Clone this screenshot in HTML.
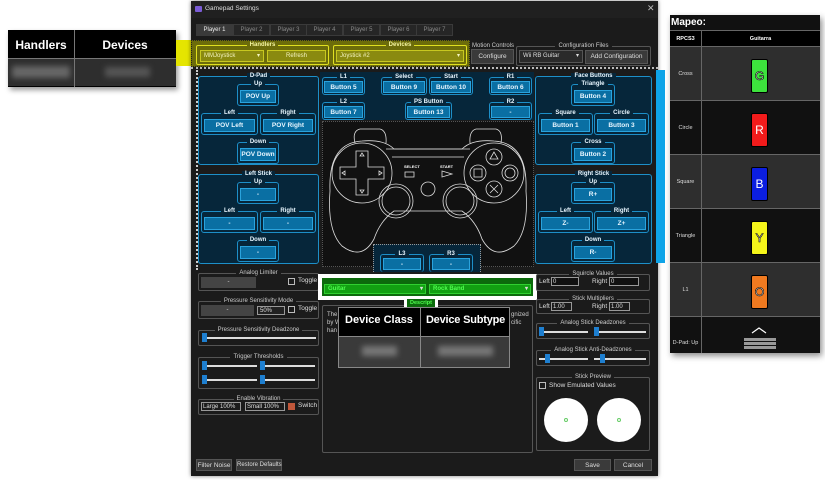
<!DOCTYPE html>
<html><head><meta charset="utf-8">
<style>
*{box-sizing:border-box;margin:0;padding:0;white-space:nowrap}
body{width:825px;height:480px;background:#fff;position:relative;overflow:hidden;font-family:"Liberation Sans",sans-serif;font-size:6px;color:#ddd}
.a{position:absolute}
.grp{position:absolute;border:1px solid #555;border-radius:2px}
.grp>.lb{position:absolute;top:-5px;left:0;right:0;text-align:center;font-size:6px;line-height:8px;color:#ccc}
.grp>.lb span{background:#1b1b1b;padding:0 3px}
.bg{position:absolute;border:1.5px solid #1d8fc8;border-radius:3px;background:#06263a}
.bg>.lb{position:absolute;top:-5px;left:0;right:0;text-align:center;font-size:6px;line-height:8px;color:#e8f6ff;font-weight:bold}
.bg>.lb span{background:#06263a;padding:0 3px}
.bb{position:absolute;background:#0a6fa3;border:1px solid #2aa3dd;color:#e8f6ff;font-size:6.5px;font-weight:bold;text-align:center;line-height:12px}
.btn{position:absolute;background:#3a3a3a;border:1px solid #555;color:#ddd;font-size:6.5px;text-align:center}
.tab{position:absolute;top:24px;height:12px;width:37px;background:#262626;border:1px solid #3a3a3a;color:#888;font-size:6px;text-align:center;line-height:11px}
.sl{position:absolute;height:2px;background:#ddd}
.kn{position:absolute;width:5px;height:9px;background:#1e7fd0}
.cell{position:absolute;display:flex;align-items:center;justify-content:center}
</style></head><body>

<div class="a" style="left:8px;top:30px;width:168px;height:57px;background:#000;box-shadow:2px 3px 5px rgba(0,0,0,.4)"></div>
<div class="a" style="left:8px;top:30px;width:66px;height:28px;color:#fff;font-size:12px;font-weight:bold;text-align:center;line-height:30px">Handlers</div>
<div class="a" style="left:74px;top:30px;width:102px;height:28px;color:#fff;font-size:12px;font-weight:bold;text-align:center;line-height:30px">Devices</div>
<div class="a" style="left:8px;top:58px;width:168px;height:28px;background:#2e2e2e;border-top:1px solid #777"></div>
<div class="a" style="left:74px;top:30px;width:1px;height:57px;background:#777"></div>
<div class="a" style="left:12px;top:66px;width:58px;height:12px;background:#666;filter:blur(3px)"></div>
<div class="a" style="left:105px;top:67px;width:45px;height:10px;background:#555;filter:blur(3px)"></div>
<div class="a" style="left:176px;top:40px;width:16px;height:26px;background:#e5e500"></div>

<div class="a" style="left:191px;top:1px;width:467px;height:475px;background:#1b1b1b;box-shadow:0 0 4px rgba(0,0,0,.5)"></div>
<div class="a" style="left:191px;top:1px;width:467px;height:17px;background:#202020"></div>
<div class="a" style="left:195px;top:6px;width:7px;height:6px;background:#7b5cd6;border-radius:1px"></div>
<div class="a" style="left:205px;top:5px;font-size:6.5px;color:#ddd">Gamepad Settings</div>
<div class="a" style="left:647px;top:3px;font-size:9px;color:#bbb">✕</div>

<div class="tab" style="left:196px;background:#3a3a3a;color:#eee">Player 1</div>
<div class="tab" style="left:233px">Player 2</div>
<div class="tab" style="left:270px">Player 3</div>
<div class="tab" style="left:306px">Player 4</div>
<div class="tab" style="left:343px">Player 5</div>
<div class="tab" style="left:380px">Player 6</div>
<div class="tab" style="left:416px">Player 7</div>

<div class="a" style="left:191px;top:40px;width:279px;height:27px;background:#6c6c0a;border:1.5px dotted #222"></div>
<div class="a" style="left:196px;top:45px;width:133px;height:20px;border:1px solid #e0e020;border-radius:2px"></div>
<div class="a" style="left:196px;top:42px;width:133px;text-align:center;font-size:6px;font-weight:bold;color:#f5f5a0"><span style="background:#6c6c0a;padding:0 3px">Handlers</span></div>
<div class="a" style="left:200px;top:50px;width:64px;height:12px;background:#8a8a10;border:1px solid #c8c820;color:#f5f5c0;font-size:6px;line-height:10px;padding-left:3px">MMJoystick<span style="float:right;padding-right:3px">▾</span></div>
<div class="a" style="left:267px;top:50px;width:59px;height:12px;background:#8a8a10;border:1px solid #c8c820;color:#f5f5c0;font-size:6px;line-height:10px;text-align:center">Refresh</div>
<div class="a" style="left:333px;top:45px;width:134px;height:20px;border:1px solid #e0e020;border-radius:2px"></div>
<div class="a" style="left:333px;top:42px;width:134px;text-align:center;font-size:6px;font-weight:bold;color:#f5f5a0"><span style="background:#6c6c0a;padding:0 3px">Devices</span></div>
<div class="a" style="left:336px;top:50px;width:128px;height:12px;background:#8a8a10;border:1px solid #c8c820;color:#f5f5c0;font-size:6px;line-height:10px;padding-left:3px">Joystick #2<span style="float:right;padding-right:3px">▾</span></div>

<div class="a" style="left:472px;top:43px;font-size:6px;color:#ccc">Motion Controls</div>
<div class="btn" style="left:471px;top:49px;width:43px;height:15px;line-height:13px">Configure</div>
<div class="grp" style="left:516px;top:46px;width:135px;height:20px"><div class="lb"><span>Configuration Files</span></div></div>
<div class="a" style="left:519px;top:50px;width:64px;height:13px;background:#2a2a2a;border:1px solid #555;font-size:6px;line-height:11px;padding-left:3px">Wii RB Guitar<span style="float:right;padding-right:3px">▾</span></div>
<div class="btn" style="left:585px;top:50px;width:63px;height:14px;line-height:12px">Add Configuration</div>

<div class="a" style="left:191px;top:67px;width:467px;height:205px;border-top:2px dotted #bbb"></div>
<div class="a" style="left:196px;top:70px;width:2px;height:200px;border-left:2px dotted #ccc"></div>
<div class="a" style="left:656px;top:70px;width:9px;height:193px;background:#0fa4e8"></div>

<div class="bg" style="left:198px;top:76px;width:121px;height:89px"><div class="lb"><span>D-Pad</span></div></div>
<div class="bg" style="left:237px;top:84px;width:42px;height:22px"><div class="lb"><span>Up</span></div></div>
<div class="bb" style="left:240px;top:90px;width:36px;height:13px">POV Up</div>
<div class="bg" style="left:201px;top:113px;width:57px;height:22px"><div class="lb"><span>Left</span></div></div>
<div class="bb" style="left:204px;top:119px;width:51px;height:13px">POV Left</div>
<div class="bg" style="left:260px;top:113px;width:56px;height:22px"><div class="lb"><span>Right</span></div></div>
<div class="bb" style="left:263px;top:119px;width:50px;height:13px">POV Right</div>
<div class="bg" style="left:237px;top:142px;width:42px;height:22px"><div class="lb"><span>Down</span></div></div>
<div class="bb" style="left:240px;top:148px;width:36px;height:13px">POV Down</div>

<div class="bg" style="left:198px;top:174px;width:121px;height:90px"><div class="lb"><span>Left Stick</span></div></div>
<div class="bg" style="left:237px;top:182px;width:42px;height:22px"><div class="lb"><span>Up</span></div></div>
<div class="bb" style="left:240px;top:188px;width:36px;height:13px">-</div>
<div class="bg" style="left:201px;top:211px;width:57px;height:22px"><div class="lb"><span>Left</span></div></div>
<div class="bb" style="left:204px;top:217px;width:51px;height:13px">-</div>
<div class="bg" style="left:260px;top:211px;width:56px;height:22px"><div class="lb"><span>Right</span></div></div>
<div class="bb" style="left:263px;top:217px;width:50px;height:13px">-</div>
<div class="bg" style="left:237px;top:240px;width:42px;height:22px"><div class="lb"><span>Down</span></div></div>
<div class="bb" style="left:240px;top:246px;width:36px;height:13px">-</div>

<div class="bg" style="left:535px;top:76px;width:117px;height:89px"><div class="lb"><span>Face Buttons</span></div></div>
<div class="bg" style="left:571px;top:84px;width:44px;height:22px"><div class="lb"><span>Triangle</span></div></div>
<div class="bb" style="left:574px;top:90px;width:38px;height:13px">Button 4</div>
<div class="bg" style="left:538px;top:113px;width:55px;height:22px"><div class="lb"><span>Square</span></div></div>
<div class="bb" style="left:541px;top:119px;width:49px;height:13px">Button 1</div>
<div class="bg" style="left:594px;top:113px;width:55px;height:22px"><div class="lb"><span>Circle</span></div></div>
<div class="bb" style="left:597px;top:119px;width:49px;height:13px">Button 3</div>
<div class="bg" style="left:571px;top:142px;width:44px;height:22px"><div class="lb"><span>Cross</span></div></div>
<div class="bb" style="left:574px;top:148px;width:38px;height:13px">Button 2</div>

<div class="bg" style="left:535px;top:174px;width:117px;height:90px"><div class="lb"><span>Right Stick</span></div></div>
<div class="bg" style="left:571px;top:182px;width:44px;height:22px"><div class="lb"><span>Up</span></div></div>
<div class="bb" style="left:574px;top:188px;width:38px;height:13px">R+</div>
<div class="bg" style="left:538px;top:211px;width:55px;height:22px"><div class="lb"><span>Left</span></div></div>
<div class="bb" style="left:541px;top:217px;width:49px;height:13px">Z-</div>
<div class="bg" style="left:594px;top:211px;width:55px;height:22px"><div class="lb"><span>Right</span></div></div>
<div class="bb" style="left:597px;top:217px;width:49px;height:13px">Z+</div>
<div class="bg" style="left:571px;top:240px;width:44px;height:22px"><div class="lb"><span>Down</span></div></div>
<div class="bb" style="left:574px;top:246px;width:38px;height:13px">R-</div>

<div class="a" style="left:320px;top:72px;width:214px;height:48px;background:#06263a"></div>
<div class="bg" style="left:322px;top:77px;width:43px;height:18px"><div class="lb"><span>L1</span></div></div>
<div class="bb" style="left:324px;top:81px;width:39px;height:12px">Button 5</div>
<div class="bg" style="left:381px;top:77px;width:46px;height:18px"><div class="lb"><span>Select</span></div></div>
<div class="bb" style="left:383px;top:81px;width:42px;height:12px">Button 9</div>
<div class="bg" style="left:429px;top:77px;width:44px;height:18px"><div class="lb"><span>Start</span></div></div>
<div class="bb" style="left:431px;top:81px;width:40px;height:12px">Button 10</div>
<div class="bg" style="left:489px;top:77px;width:43px;height:18px"><div class="lb"><span>R1</span></div></div>
<div class="bb" style="left:491px;top:81px;width:39px;height:12px">Button 6</div>
<div class="bg" style="left:322px;top:102px;width:43px;height:18px"><div class="lb"><span>L2</span></div></div>
<div class="bb" style="left:324px;top:106px;width:39px;height:12px">Button 7</div>
<div class="bg" style="left:405px;top:102px;width:47px;height:18px"><div class="lb"><span>PS Button</span></div></div>
<div class="bb" style="left:407px;top:106px;width:43px;height:12px">Button 13</div>
<div class="bg" style="left:489px;top:102px;width:43px;height:18px"><div class="lb"><span>R2</span></div></div>
<div class="bb" style="left:491px;top:106px;width:39px;height:12px">-</div>

<div class="a" style="left:322px;top:121px;width:212px;height:146px;background:#111;border:1.5px dotted #555"></div>
<svg class="a" style="left:322px;top:121px" width="212" height="146" viewBox="0 0 212 146" fill="none" stroke="#ddd" stroke-width="0.8">
<path d="M33 22 Q30 10 38 8 L58 8 Q65 10 64 22 M148 22 Q147 10 154 8 L174 8 Q181 10 179 22"/>
<path d="M64 28 L148 28 M70 36 L142 36"/>
<path d="M40 20 Q6 22 8 70 Q5 110 20 125 Q40 140 52 118 Q58 100 72 90 L140 90 Q154 100 160 118 Q172 140 192 125 Q207 110 204 70 Q206 22 172 20 Q150 18 140 28 L72 28 Q62 18 40 20Z"/>
<circle cx="40" cy="52" r="30"/><circle cx="172" cy="52" r="30"/>
<path d="M34 30 h12 v16 h16 v12 h-16 v16 h-12 v-16 h-16 v-12 h16z"/>
<path d="M40 32 l-2 3 h4z M40 72 l-2 -3 h4z M20 52 l3 -2 v4z M60 52 l-3 -2 v4z"/>
<circle cx="172" cy="36" r="8"/><circle cx="172" cy="68" r="8"/><circle cx="156" cy="52" r="8"/><circle cx="188" cy="52" r="8"/>
<path d="M172 31 l-4 7 h8z M168 64 l8 8 M176 64 l-8 8"/><rect x="152" y="48" width="8" height="8"/><circle cx="188" cy="52" r="5"/>
<rect x="83" y="51" width="9" height="5"/><path d="M120 50 l10 3 l-10 3z"/>
<circle cx="106" cy="68" r="7"/>
<circle cx="74" cy="80" r="17"/><circle cx="74" cy="80" r="14"/><circle cx="138" cy="80" r="17"/><circle cx="138" cy="80" r="14"/>
<text x="82" y="47" font-size="4" fill="#fff" stroke="none" font-family="Liberation Sans" font-weight="bold">SELECT</text>
<text x="118" y="47" font-size="4" fill="#fff" stroke="none" font-family="Liberation Sans" font-weight="bold">START</text>
</svg>
<div class="a" style="left:373px;top:244px;width:108px;height:28px;background:#06263a;border:1.5px dotted #999;border-bottom:none"></div>
<div class="bg" style="left:380px;top:254px;width:44px;height:18px;border-bottom:none"><div class="lb"><span>L3</span></div></div>
<div class="bb" style="left:383px;top:258px;width:38px;height:12px">-</div>
<div class="bg" style="left:429px;top:254px;width:44px;height:18px;border-bottom:none"><div class="lb"><span>R3</span></div></div>
<div class="bb" style="left:432px;top:258px;width:38px;height:12px">-</div>

<div class="grp" style="left:198px;top:273px;width:121px;height:18px"><div class="lb"><span>Analog Limiter</span></div></div>
<div class="a" style="left:201px;top:277px;width:55px;height:11px;background:#444;text-align:center;line-height:11px">-</div>
<div class="a" style="left:288px;top:278px;width:7px;height:7px;border:1px solid #bbb"></div>
<div class="a" style="left:298px;top:277px;font-size:6.5px">Toggle</div>
<div class="grp" style="left:198px;top:301px;width:121px;height:18px"><div class="lb"><span>Pressure Sensitivity Mode</span></div></div>
<div class="a" style="left:201px;top:305px;width:53px;height:11px;background:#444;text-align:center;line-height:11px">-</div>
<div class="a" style="left:257px;top:306px;width:28px;height:9px;background:#222;border:1px solid #999;font-size:6px;line-height:8px;padding-left:2px">50%</div>
<div class="a" style="left:288px;top:306px;width:7px;height:7px;border:1px solid #bbb"></div>
<div class="a" style="left:298px;top:305px;font-size:6.5px">Toggle</div>
<div class="grp" style="left:198px;top:330px;width:121px;height:16px"><div class="lb"><span>Pressure Sensitivity Deadzone</span></div></div>
<div class="sl" style="left:204px;top:337px;width:112px"></div><div class="kn" style="left:202px;top:333px"></div>
<div class="grp" style="left:198px;top:357px;width:121px;height:32px"><div class="lb"><span>Trigger Thresholds</span></div></div>
<div class="sl" style="left:204px;top:365px;width:53px"></div><div class="kn" style="left:202px;top:361px"></div>
<div class="sl" style="left:262px;top:365px;width:53px"></div><div class="kn" style="left:260px;top:361px"></div>
<div class="sl" style="left:204px;top:379px;width:53px"></div><div class="kn" style="left:202px;top:375px"></div>
<div class="sl" style="left:262px;top:379px;width:53px"></div><div class="kn" style="left:260px;top:375px"></div>
<div class="grp" style="left:198px;top:399px;width:121px;height:16px"><div class="lb"><span>Enable Vibration</span></div></div>
<div class="a" style="left:201px;top:402px;width:40px;height:9px;border:1px solid #999;font-size:6px;line-height:8px;padding-left:1px">Large 100%</div>
<div class="a" style="left:245px;top:402px;width:40px;height:9px;border:1px solid #999;font-size:6px;line-height:8px;padding-left:1px">Small 100%</div>
<div class="a" style="left:288px;top:403px;width:7px;height:7px;background:#c0573a"></div>
<div class="a" style="left:298px;top:402px;font-size:6.5px">Switch</div>

<div class="a" style="left:322px;top:305px;width:211px;height:148px;border:1px solid #555;border-radius:2px"></div>
<div class="a" style="left:327px;top:311px;font-size:6px;line-height:8px;color:#ccc;white-space:normal">The<br>by W<br>han</div>
<div class="a" style="left:511px;top:311px;font-size:6px;line-height:8px;color:#ccc;white-space:normal">gnized<br>cific</div>

<div class="a" style="left:318px;top:274px;width:219px;height:26px;border:4px solid #fff;background:#0c6a0c"></div>
<div class="a" style="left:324px;top:284px;width:102px;height:10px;background:#12a012;border:1px solid #30d030;color:#50ff50;font-size:6px;font-weight:bold;line-height:8px;padding-left:3px">Guitar<span style="float:right;padding-right:2px;color:#ddd">▾</span></div>
<div class="a" style="left:429px;top:284px;width:102px;height:10px;background:#12a012;border:1px solid #30d030;color:#50ff50;font-size:6px;font-weight:bold;line-height:8px;padding-left:3px">Rock Band<span style="float:right;padding-right:2px;color:#ddd">▾</span></div>
<div class="a" style="left:404px;top:299px;width:34px;height:9px;border-left:3px solid #fff;border-right:3px solid #fff;background:#0c6a0c;color:#50ff50;font-size:5.5px;font-weight:bold;text-align:center;line-height:9px;overflow:hidden">Descript</div>

<div class="a" style="left:338px;top:307px;width:172px;height:61px;background:#000;border:1px solid #888"></div>
<div class="a" style="left:338px;top:336px;width:172px;height:32px;background:#3a3a3a;border:1px solid #888"></div>
<div class="a" style="left:420px;top:307px;width:1px;height:61px;background:#888"></div>
<div class="a" style="left:338px;top:314px;width:82px;text-align:center;font-size:11px;font-weight:bold;color:#fff">Device Class</div>
<div class="a" style="left:421px;top:314px;width:89px;text-align:center;font-size:11px;font-weight:bold;color:#fff;letter-spacing:-0.2px">Device Subtype</div>
<div class="a" style="left:362px;top:346px;width:35px;height:10px;background:#777;filter:blur(3px)"></div>
<div class="a" style="left:438px;top:346px;width:55px;height:10px;background:#777;filter:blur(3px)"></div>

<div class="grp" style="left:536px;top:274px;width:114px;height:17px"><div class="lb"><span>Squircle Values</span></div></div>
<div class="a" style="left:539px;top:278px;font-size:6.5px">Left</div>
<div class="a" style="left:551px;top:277px;width:28px;height:9px;border:1px solid #999;background:#111;font-size:6px;line-height:8px;padding-left:1px">0</div>
<div class="a" style="left:592px;top:278px;font-size:6.5px">Right</div>
<div class="a" style="left:609px;top:277px;width:30px;height:9px;border:1px solid #999;background:#111;font-size:6px;line-height:8px;padding-left:1px">0</div>
<div class="grp" style="left:536px;top:299px;width:114px;height:15px"><div class="lb"><span>Stick Multipliers</span></div></div>
<div class="a" style="left:539px;top:303px;font-size:6.5px">Left</div>
<div class="a" style="left:551px;top:302px;width:21px;height:9px;border:1px solid #999;font-size:6px;line-height:8px;padding-left:1px">1.00</div>
<div class="a" style="left:592px;top:303px;font-size:6.5px">Right</div>
<div class="a" style="left:609px;top:302px;width:21px;height:9px;border:1px solid #999;font-size:6px;line-height:8px;padding-left:1px">1.00</div>
<div class="grp" style="left:536px;top:323px;width:114px;height:16px"><div class="lb"><span>Analog Stick Deadzones</span></div></div>
<div class="sl" style="left:541px;top:331px;width:47px"></div><div class="kn" style="left:539px;top:327px"></div>
<div class="sl" style="left:596px;top:331px;width:50px"></div><div class="kn" style="left:594px;top:327px"></div>
<div class="grp" style="left:536px;top:350px;width:114px;height:16px"><div class="lb"><span>Analog Stick Anti-Deadzones</span></div></div>
<div class="sl" style="left:539px;top:358px;width:49px"></div><div class="kn" style="left:545px;top:354px"></div>
<div class="sl" style="left:594px;top:358px;width:52px"></div><div class="kn" style="left:600px;top:354px"></div>
<div class="grp" style="left:536px;top:377px;width:114px;height:74px"><div class="lb"><span>Stick Preview</span></div></div>
<div class="a" style="left:539px;top:382px;width:7px;height:7px;border:1px solid #bbb"></div>
<div class="a" style="left:549px;top:382px;font-size:6.5px">Show Emulated Values</div>
<div class="a" style="left:544px;top:398px;width:44px;height:44px;border-radius:50%;background:#fff"></div>
<div class="a" style="left:597px;top:398px;width:44px;height:44px;border-radius:50%;background:#fff"></div>
<div class="a" style="left:564px;top:418px;width:4px;height:4px;border:1px solid #6c6;border-radius:50%"></div>
<div class="a" style="left:617px;top:418px;width:4px;height:4px;border:1px solid #6c6;border-radius:50%"></div>

<div class="btn" style="left:196px;top:459px;width:36px;height:12px;line-height:11px">Filter Noise</div>
<div class="btn" style="left:236px;top:459px;width:46px;height:12px;line-height:11px;font-size:6px">Restore Defaults</div>
<div class="btn" style="left:574px;top:459px;width:37px;height:12px;line-height:11px">Save</div>
<div class="btn" style="left:614px;top:459px;width:38px;height:12px;line-height:11px">Cancel</div>

<div class="a" style="left:670px;top:15px;width:150px;height:338px;background:#111;box-shadow:2px 3px 6px rgba(0,0,0,.45)"></div>
<div class="a" style="left:671px;top:15px;font-size:10px;font-weight:bold;color:#fff;line-height:15px">Mapeo:</div>
<div class="a" style="left:670px;top:30px;width:150px;height:17px;background:#000;border-top:1px solid #666;border-bottom:1px solid #666"></div>
<div class="cell" style="left:670px;top:31px;width:31px;height:16px;font-size:5.5px;color:#fff;font-weight:bold">RPCS3</div>
<div class="cell" style="left:701px;top:31px;width:119px;height:16px;font-size:5.5px;color:#fff;font-weight:bold">Guitarra</div>

<div class="a" style="left:670px;top:47px;width:150px;height:54px;background:#2e2e2e;border-bottom:1px solid #666"></div>
<div class="a" style="left:670px;top:101px;width:150px;height:54px;background:#111;border-bottom:1px solid #666"></div>
<div class="a" style="left:670px;top:155px;width:150px;height:54px;background:#2e2e2e;border-bottom:1px solid #666"></div>
<div class="a" style="left:670px;top:209px;width:150px;height:54px;background:#111;border-bottom:1px solid #666"></div>
<div class="a" style="left:670px;top:263px;width:150px;height:54px;background:#2e2e2e;border-bottom:1px solid #666"></div>
<div class="a" style="left:701px;top:30px;width:1px;height:323px;background:#666"></div>

<div class="cell" style="left:670px;top:47px;width:31px;height:54px;font-size:5.5px;color:#ddd">Cross</div>
<div class="cell" style="left:670px;top:101px;width:31px;height:54px;font-size:5.5px;color:#ddd">Circle</div>
<div class="cell" style="left:670px;top:155px;width:31px;height:54px;font-size:5.5px;color:#ddd">Square</div>
<div class="cell" style="left:670px;top:209px;width:31px;height:54px;font-size:5.5px;color:#ddd">Triangle</div>
<div class="cell" style="left:670px;top:263px;width:31px;height:54px;font-size:5.5px;color:#ddd">L1</div>
<div class="cell" style="left:670px;top:336px;width:31px;height:14px;font-size:5.5px;color:#ddd">D-Pad: Up</div>

<div class="cell" style="left:751px;top:59px;width:17px;height:34px;background:#3de23d;border:1px solid #000;border-radius:2px;font-size:12px;color:#fff;-webkit-text-stroke:0.6px #000">G</div>
<div class="cell" style="left:751px;top:113px;width:17px;height:34px;background:#f21b1b;border:1px solid #000;border-radius:2px;font-size:12px;color:#fff">R</div>
<div class="cell" style="left:751px;top:167px;width:17px;height:34px;background:#0b1ee0;border:1px solid #000;border-radius:2px;font-size:12px;color:#fff">B</div>
<div class="cell" style="left:751px;top:221px;width:17px;height:34px;background:#f5f51a;border:1px solid #000;border-radius:2px;font-size:12px;color:#fff;-webkit-text-stroke:0.6px #000">Y</div>
<div class="cell" style="left:751px;top:275px;width:17px;height:34px;background:#f07a20;border:1px solid #000;border-radius:2px;font-size:12px;color:#fff;-webkit-text-stroke:0.6px #000">O</div>
<svg class="a" style="left:750px;top:326px" width="18" height="8"><path d="M2 7 L9 2 L16 7" stroke="#fff" stroke-width="1.2" fill="none"/></svg>
<div class="a" style="left:744px;top:338px;width:32px;height:3px;background:#999"></div>
<div class="a" style="left:744px;top:342px;width:32px;height:3px;background:#999"></div>
<div class="a" style="left:744px;top:346px;width:32px;height:3px;background:#999"></div>
</body></html>
